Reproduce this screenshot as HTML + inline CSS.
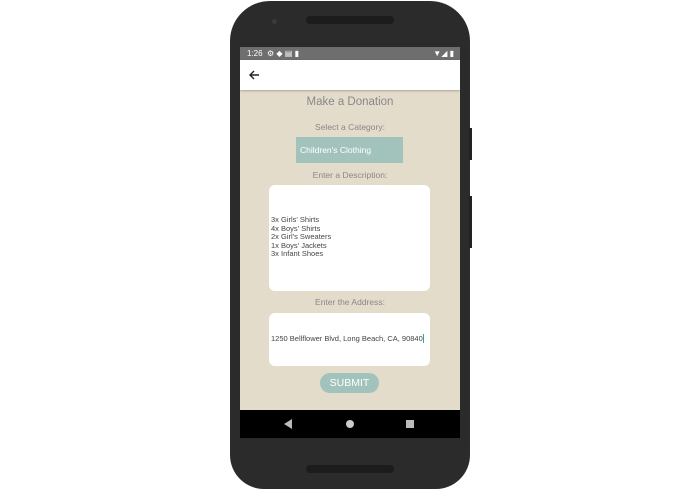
<!DOCTYPE html>
<html><head><style>
*{margin:0;padding:0;box-sizing:border-box}
body{width:695px;height:494px;background:#fff;position:relative;overflow:hidden;font-family:"Liberation Sans",sans-serif}
.phone{position:absolute;left:230px;top:1px;width:240px;height:488px;background:#2b2b2b;border-radius:40px 40px 34px 34px}
.cam{position:absolute;left:272px;top:19px;width:5px;height:5px;border-radius:50%;background:#3a3a3a}
.spk{position:absolute;left:306px;top:16px;width:88px;height:8px;border-radius:4px;background:#1c1c1c}
.spk2{position:absolute;left:306px;top:465px;width:88px;height:8px;border-radius:4px;background:#1c1c1c}
.btn{position:absolute;left:469px;width:3px;background:#222}
.screen{position:absolute;left:240px;top:47px;width:220px;height:391px;background:#e4dccb;overflow:hidden}
.status{height:13px;background:#6e6e6e;color:#fff;font-size:8px;line-height:13px;padding-left:7px}
.appbar{height:30px;background:#fff;box-shadow:0 1px 2px rgba(0,0,0,.25);position:relative}
.c{position:absolute;left:0;width:220px;text-align:center;color:#888;font-size:8.5px}
.box{position:absolute;background:#fff;border-radius:6px;left:29px;width:161px}
.nav{position:absolute;left:0;top:363px;width:220px;height:28px;background:#000}
</style></head><body>
<div class="phone"></div>
<div class="btn" style="top:128px;height:32px"></div>
<div class="btn" style="top:196px;height:52px"></div>
<div class="cam"></div><div class="spk"></div><div class="spk2"></div>
<div class="screen">
 <div class="status">1:26 &nbsp;⚙ ◆ ▤ ▮<span style="position:absolute;right:6px">▼◢ ▮</span></div>
 <div class="appbar"><svg style="position:absolute;left:9px;top:10px" width="11" height="10" viewBox="0 0 11 10"><path d="M10 5H1.5M5 1L1 5l4 4" stroke="#222" stroke-width="1.4" fill="none"/></svg></div>
 <div class="c" style="top:49px;font-size:11.5px;color:#888">Make a Donation</div>
 <div class="c" style="top:75px">Select a Category:</div>
 <div style="position:absolute;left:56px;top:90px;width:107px;height:26px;background:#a2c3bc;color:#fff;font-size:8.5px;line-height:26px;padding-left:4px">Children's Clothing</div>
 <div class="c" style="top:123px">Enter a Description:</div>
 <div class="box" style="top:138px;height:106px;font-size:7.5px;color:#444;line-height:8.5px;padding:31px 0 0 2px">3x Girls' Shirts<br>4x Boys' Shirts<br>2x Girl's Sweaters<br>1x Boys' Jackets<br>3x Infant Shoes</div>
 <div class="c" style="top:250px">Enter the Address:</div>
 <div class="box" style="top:266px;height:53px;font-size:7.5px;color:#444;padding:21px 0 0 2px">1250 Bellflower Blvd, Long Beach, CA, 90840<span style="border-left:1px solid #3a9">&#8203;</span></div>
 <div style="position:absolute;left:80px;top:326px;width:59px;height:20px;border-radius:10px;background:#a2c3bc;color:#fff;font-size:10.5px;line-height:20px;text-align:center">SUBMIT</div>
 <div class="nav">
  <svg style="position:absolute;left:44px;top:9px" width="9" height="10"><path d="M8 0v10L0 5z" fill="#bbb"/></svg>
  <div style="position:absolute;left:106px;top:10px;width:8px;height:8px;border-radius:50%;background:#ccc"></div>
  <div style="position:absolute;left:166px;top:10px;width:8px;height:8px;background:#bbb"></div>
 </div>
</div>
</body></html>
